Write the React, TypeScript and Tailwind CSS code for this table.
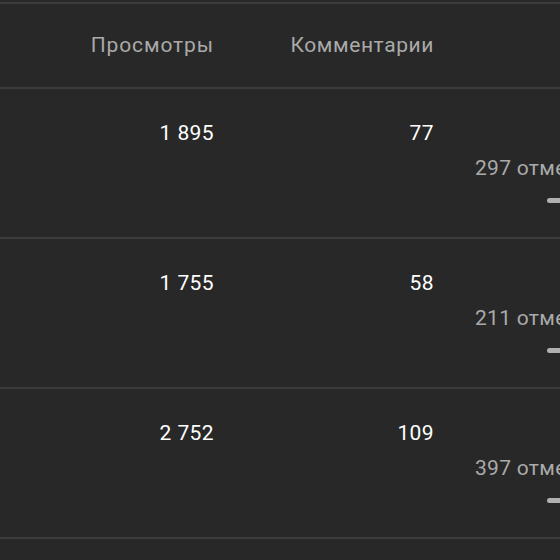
const rows = [
  { views: "1\u00a0895", comments: "77", likes: "297 отметок «Нравится»" },
  { views: "1\u00a0755", comments: "58", likes: "211 отметок «Нравится»" },
  { views: "2\u00a0752", comments: "109", likes: "397 отметок «Нравится»" },
];

export default function App() {
  return (
    <div className="w-[560px] h-[560px] overflow-hidden bg-[#282828] font-['Roboto',sans-serif] text-[21px] tracking-[0.4px]">
      <div className="h-[2px]" />
      <div className="border-t-2 border-[#3c3c3c]" />
      {/* header */}
      <div className="flex h-[85px] items-center border-b-2 border-[#3c3c3c] text-[#aaaaaa]">
        <div className="w-[230px] shrink-0 pr-[16px] text-right tracking-[0.9px]">Просмотры</div>
        <div className="w-[220px] shrink-0 pr-[16px] text-right tracking-[0.6px]">Комментарии</div>
        <div className="w-[300px] shrink-0" />
      </div>

      {rows.map((r) => (
        <div key={r.views} className="flex h-[150px] border-b-2 border-[#3c3c3c]">
          <div className="w-[230px] shrink-0 pr-[16px] pt-[29px] text-right text-white">{r.views}</div>
          <div className="w-[220px] shrink-0 pr-[16px] pt-[29px] text-right text-white">{r.comments}</div>
          <div className="w-[300px] shrink-0 pl-[25px] pt-[67px]">
            <div className="whitespace-nowrap leading-[24px] tracking-[0.3px] text-[#aaaaaa]">{r.likes}</div>
            <div className="ml-[72px] mt-[18px] h-[5px] w-[120px] rounded-full bg-[#b0b0b0]" />
          </div>
        </div>
      ))}
    </div>
  );
}
